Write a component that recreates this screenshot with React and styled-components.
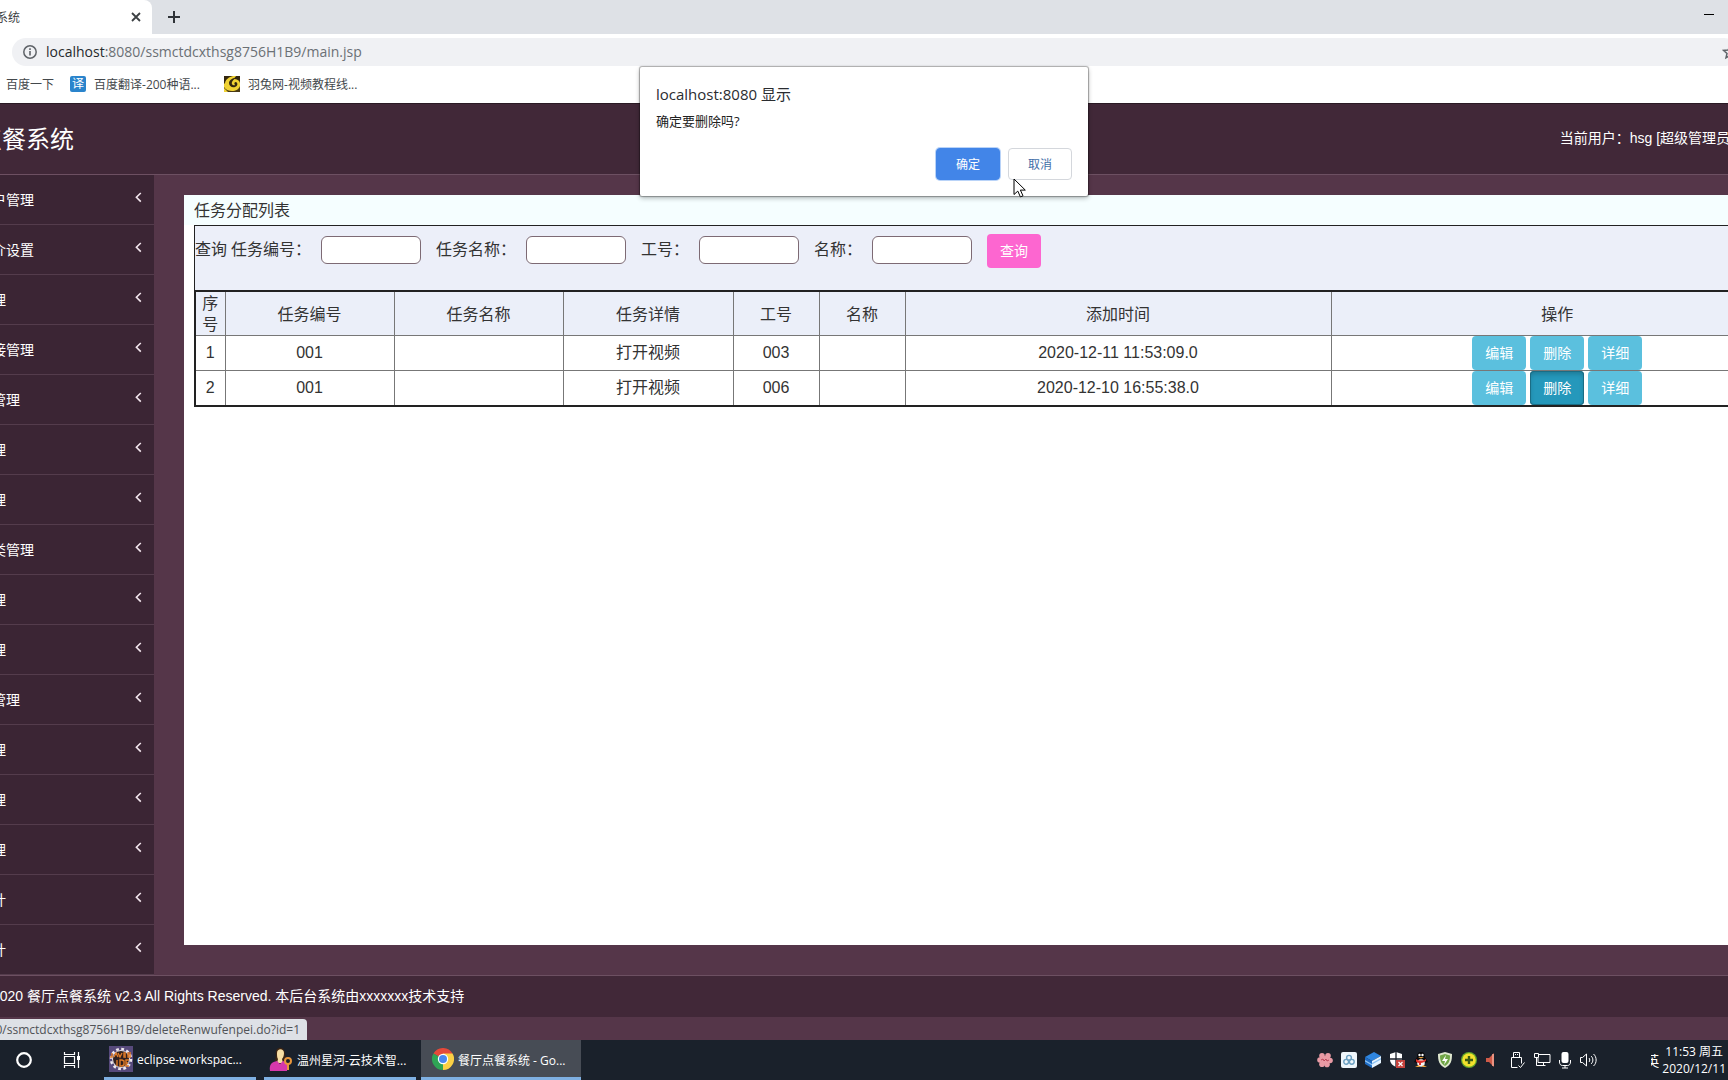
import React, { useState } from "react";
import styled, { createGlobalStyle, css } from "styled-components";

const MENU = [
  "系统用户管理",
  "系统简介设置",
  "公告管理",
  "友情链接管理",
  "服务员管理",
  "员工管理",
  "餐桌管理",
  "菜品分类管理",
  "菜品管理",
  "订单管理",
  "购物车管理",
  "评价管理",
  "任务管理",
  "留言管理",
  "销量统计",
  "订单统计",
];

const FIELDS = [
  { id: "bianhao", label: "任务编号：" },
  { id: "mingcheng", label: "任务名称：" },
  { id: "gonghao", label: "工号：" },
  { id: "xingming", label: "名称：" },
];

const ROWS = [
  {
    code: "001",
    name: "",
    detail: "打开视频",
    worker: "003",
    person: "",
    time: "2020-12-11 11:53:09.0",
  },
  {
    code: "001",
    name: "",
    detail: "打开视频",
    worker: "006",
    person: "",
    time: "2020-12-10 16:55:38.0",
  },
];

const App = () => {
  const [selected] = useState(1);

  return (
    <Viewport>
      <GlobalStyle />
      <Desktop>
        <TabStrip>
          <Tab>
            <TabTitle>餐厅点餐系统</TabTitle>
            <PlainButton aria-label="关闭标签页">
              <svg width="10" height="10" viewBox="0 0 10 10">
                <path d="M1 1l8 8M9 1l-8 8" stroke="#3c4043" strokeWidth="1.8" />
              </svg>
            </PlainButton>
          </Tab>
          <NewTab aria-label="打开新的标签页">
            <svg width="14" height="14" viewBox="0 0 14 14">
              <path d="M7 1v12M1 7h12" stroke="#2f3338" strokeWidth="2" />
            </svg>
          </NewTab>
          <Minimize aria-label="最小化">
            <svg width="10" height="10" viewBox="0 0 10 10">
              <path d="M0 4.5h10" stroke="#000" />
            </svg>
          </Minimize>
        </TabStrip>

        <AddressRow>
          <Omnibox>
            <InfoIcon />
            <Url>
              <b>localhost</b>:8080/ssmctdcxthsg8756H1B9/main.jsp
            </Url>
            <PlainButton aria-label="为此标签页添加书签">
              <svg width="16" height="16" viewBox="0 0 16 16">
                <path
                  d="M8 1.8l1.9 4.2 4.5.4-3.4 3 1 4.4L8 11.5l-4 2.3 1-4.4-3.4-3 4.5-.4z"
                  fill="none"
                  stroke="#5f6368"
                  strokeWidth="1.5"
                />
              </svg>
            </PlainButton>
          </Omnibox>
        </AddressRow>

        <Bookmarks>
          <Bookmark href="#baidu">百度一下</Bookmark>
          <Bookmark href="#fanyi" $wide>
            <TranslateIcon>译</TranslateIcon>
            百度翻译-200种语...
          </Bookmark>
          <Bookmark href="#yutu" $wide>
            <RabbitIcon />
            羽兔网-视频教程线...
          </Bookmark>
        </Bookmarks>

        <Header>
          <Brand>餐厅点餐系统</Brand>
          <User>当前用户：hsg [超级管理员]</User>
        </Header>

        <Body>
          <Sidebar>
            {MENU.map((label, i) => (
              <MenuItem key={i} href={`#menu-${i}`}>
                {label}
                <svg width="7" height="11" viewBox="0 0 7 11">
                  <path
                    d="M5.8 1L1.4 5.3 5.8 9.6"
                    fill="none"
                    stroke="#f3e6ee"
                    strokeWidth="1.6"
                  />
                </svg>
              </MenuItem>
            ))}
          </Sidebar>

          <Content>
            <Panel>
              <PanelTitle>任务分配列表</PanelTitle>
              <SearchBar onSubmit={(e) => e.preventDefault()}>
                <SearchCaption>查询</SearchCaption>
                {FIELDS.map((f) => (
                  <Field key={f.id}>
                    <label htmlFor={f.id}>{f.label}</label>
                    <TextInput id={f.id} type="text" />
                  </Field>
                ))}
                <SearchButton type="submit">查询</SearchButton>
              </SearchBar>
              <Table>
                <colgroup>
                  <Col $w={30} />
                  <Col $w={169} />
                  <Col $w={169} />
                  <Col $w={170} />
                  <Col $w={86} />
                  <Col $w={86} />
                  <Col $w={426} />
                  <col />
                </colgroup>
                <thead>
                  <tr>
                    <th>序号</th>
                    <th>任务编号</th>
                    <th>任务名称</th>
                    <th>任务详情</th>
                    <th>工号</th>
                    <th>名称</th>
                    <th>添加时间</th>
                    <th>操作</th>
                  </tr>
                </thead>
                <tbody>
                  {ROWS.map((row, i) => (
                    <tr key={row.time}>
                      <td>{i + 1}</td>
                      <td>{row.code}</td>
                      <td>{row.name}</td>
                      <td>{row.detail}</td>
                      <td>{row.worker}</td>
                      <td>{row.person}</td>
                      <td>{row.time}</td>
                      <td>
                        <Actions>
                          <ActionButton>编辑</ActionButton>
                          <ActionButton $active={i === selected}>
                            删除
                          </ActionButton>
                          <ActionButton>详细</ActionButton>
                        </Actions>
                      </td>
                    </tr>
                  ))}
                </tbody>
              </Table>
            </Panel>
          </Content>
        </Body>

        <Footer>
          Copyright © 2020 餐厅点餐系统 v2.3 All Rights Reserved.
          本后台系统由xxxxxxx技术支持
        </Footer>
        <Bottom>
          <StatusBubble>
            localhost:8080/ssmctdcxthsg8756H1B9/deleteRenwufenpei.do?id=1
          </StatusBubble>
        </Bottom>

        <Taskbar>
          <SystemButton aria-label="Cortana">
            <svg width="18" height="18" viewBox="0 0 18 18">
              <circle
                cx="9"
                cy="9"
                r="6.8"
                fill="none"
                stroke="#fff"
                strokeWidth="2.2"
              />
            </svg>
          </SystemButton>
          <SystemButton aria-label="任务视图">
            <svg width="18" height="18" viewBox="0 0 18 18">
              <path
                d="M1.5 1v2.5h10V1M1.5 17v-2.5h10V17M1.5 5.5h10v7h-10zM15.5 1v16"
                fill="none"
                stroke="#fff"
                strokeWidth="1.2"
              />
              <path d="M14 5h3v4h-3z" fill="#fff" />
            </svg>
          </SystemButton>
          <TaskButton>
            <EclipseIcon />
            <span>eclipse-workspac...</span>
          </TaskButton>
          <TaskButton>
            <PersonIcon />
            <span>温州星河-云技术智...</span>
          </TaskButton>
          <TaskButton $active>
            <ChromeIcon />
            <span>餐厅点餐系统 - Go...</span>
          </TaskButton>
          <Tray>
            <TrayIcons />
          </Tray>
          <Ime>英</Ime>
          <Clock>
            <span>11:53 周五</span>
            <span>2020/12/11</span>
          </Clock>
        </Taskbar>
      </Desktop>

      <Dialog role="dialog" aria-labelledby="dialog-title">
        <DialogTitle id="dialog-title">localhost:8080 显示</DialogTitle>
        <DialogMessage>确定要删除吗?</DialogMessage>
        <DialogActions>
          <DialogButton $primary>确定</DialogButton>
          <DialogButton>取消</DialogButton>
        </DialogActions>
        <Cursor width="13" height="20" viewBox="0 0 13 20">
          <path
            d="M1 1v15.5l3.8-3.4 2.6 5.8 2.6-1.1-2.6-5.7h4.9z"
            fill="#fff"
            stroke="#000"
          />
        </Cursor>
      </Dialog>
    </Viewport>
  );
};

const InfoIcon = () => (
  <svg width="14" height="14" viewBox="0 0 14 14">
    <circle cx="7" cy="7" r="6.2" fill="none" stroke="#5f6368" strokeWidth="1.5" />
    <path d="M7 6v4.5M7 3.3v1.6" stroke="#5f6368" strokeWidth="1.6" />
  </svg>
);

const RabbitIcon = () => (
  <svg width="16" height="16" viewBox="0 0 16 16">
    <path d="M0 0h16v16H0z" fill="#f0d233" />
    <path d="M0 0h9C5 1 2 3 1 7L0 8zM12 0h4v7c-1-3-3-4-6-4z" fill="#33260f" />
    <path
      d="M13 1C9 2 5 4 5 7c0 3 3 5 6 4 3-1 3-4 1-5-2 0-2 2-1 3-2 1-4-1-3-3 1-2 3-4 5-5z"
      fill="#33260f"
    />
    <path d="M0 11c2 3 5 4 8 4 4 0 7-2 8-5v6H0z" fill="#4a3a14" />
    <path d="M0 12l4 4H0z" fill="#f0d233" />
  </svg>
);

const EclipseIcon = () => (
  <svg width="24" height="26" viewBox="0 0 24 26">
    <path d="M0 0h24v26H0z" fill="#574a7c" />
    <circle
      cx="12"
      cy="13"
      r="10"
      fill="none"
      stroke="#efe9ee"
      strokeWidth="2.5"
      strokeDasharray="2.8 2.43"
    />
    <circle cx="12" cy="13" r="8.5" fill="#30201f" stroke="#e8e2e6" />
    <path
      d="M3 7v4H1M5 11l2-4 2 4M9 7l2 4 2-4M17 7h-2v4h2M15 9h2M22 7h-3v4h3M19 9h3M8 14v6M11 14v6h2l2-1v-4l-2-1zM20 14h-3v6h3M17 17h2"
      fill="none"
      stroke="#e07b28"
      strokeWidth="1.4"
    />
  </svg>
);

const PersonIcon = () => (
  <svg width="24" height="26" viewBox="0 0 24 26">
    <path d="M7 9c-2-9 9-10 9-1l1 7H6z" fill="#3b2413" />
    <path d="M8 7c0-5 7-5 7 0 0 3-1 5-2 6l1 4H8l1-4C8 12 8 9 8 7z" fill="#f7dfa4" />
    <path d="M1 25c-1-7 2-9 7-10l3 3 3-3c4 1 5 4 4 10z" fill="#d638ac" />
    <circle cx="19" cy="15" r="3" fill="none" stroke="#e8953b" strokeWidth="2" />
    <path d="M19 18v6" stroke="#e8953b" strokeWidth="2" />
  </svg>
);

const ChromeIcon = () => (
  <svg width="22" height="22" viewBox="0 0 22 22">
    <path d="M11 11L1.47 5.5A11 11 0 0 1 20.53 5.5z" fill="#e5493a" />
    <path d="M11 11L1.47 5.5A11 11 0 0 0 11 22z" fill="#2fa455" />
    <path d="M11 11L11 22A11 11 0 0 0 20.53 5.5H11z" fill="#fbd045" />
    <circle cx="11" cy="11" r="5.2" fill="#fff" />
    <circle cx="11" cy="11" r="4" fill="#4a86ee" />
  </svg>
);

const TrayIcons = () => (
  <>
    <svg width="16" height="16" viewBox="0 0 16 16">
      <g fill="#e89aa4">
        <circle cx="5" cy="3.8" r="2.8" />
        <circle cx="11" cy="3.8" r="2.8" />
        <circle cx="13" cy="8.5" r="2.8" />
        <circle cx="10" cy="12.4" r="2.8" />
        <circle cx="5" cy="12.2" r="2.8" />
        <circle cx="3" cy="8" r="2.8" />
        <circle cx="8" cy="8" r="4" />
      </g>
      <path d="M4 8l2-1 1 2 2-2 1 2 2-1" fill="none" stroke="#b94557" />
    </svg>
    <svg width="16" height="16" viewBox="0 0 16 16">
      <rect width="16" height="16" rx="2" fill="#eef6fb" />
      <g fill="none" stroke="#6ba0c2" strokeWidth="1.4">
        <circle cx="8" cy="5.8" r="2.4" />
        <circle cx="5.2" cy="9.8" r="2.4" />
        <circle cx="10.8" cy="9.8" r="2.4" />
      </g>
    </svg>
    <svg width="16" height="16" viewBox="0 0 16 16">
      <path d="M9 0l7 4-9 5-7-4z" fill="#2f86e0" />
      <path d="M0 5l7 4v7l-7-4z" fill="#1f6cc4" />
      <path d="M7 9l9-5v7l-9 5z" fill="#e5f3ff" />
      <path d="M7 11l9-5v1.5l-9 5zM0 8l7 4v1.500L0 9.500z" fill="#8cc2f2" />
    </svg>
    <svg width="16" height="16" viewBox="0 0 16 16">
      <path d="M7 0l6 2v5c0 4-2 6-6 8-4-2-6-4-6-8V2z" fill="#fff" />
      <path d="M7 0v15M1 7h12" stroke="#1b212b" strokeWidth="1.3" />
      <path d="M7 8h9v8H7z" fill="#c4423d" />
      <path d="M9.5 10l4 4M13.5 10l-4 4" stroke="#fff" strokeWidth="1.2" />
    </svg>
    <svg width="16" height="16" viewBox="0 0 16 16">
      <path
        d="M8 0c3 0 4 2 4 5l3 5-3 1c0 3-1 4-4 4s-4-1-4-4l-3-1 3-5c0-3 1-5 4-5z"
        fill="#0a0a0c"
      />
      <ellipse cx="8" cy="11" rx="3.8" ry="3.8" fill="#f4f4f4" />
      <path d="M3 7c3 2 7 2 10 0v2c-2 1-4 2-5 2v2H6v-2c-1 0-3-1-3-2z" fill="#e0322c" />
      <path d="M5 5h6l-3 1.5zM2 15l4-2 1 2zM14 15l-4-2-1 2z" fill="#eda33a" />
      <circle cx="6.5" cy="3" r="1.2" fill="#fff" />
      <circle cx="9.5" cy="3" r="1.2" fill="#fff" />
    </svg>
    <svg width="16" height="16" viewBox="0 0 16 16">
      <path d="M8 0l7 2c0 7-1 11-7 14C2 13 1 9 1 2z" fill="#dfe8cf" />
      <path d="M8 2l5 1.5c0 5-1 8-5 10.5-4-2.5-5-5.500-5-10.500z" fill="#6fa545" />
      <path d="M9 3L5 9h3l-1 4 4-6H8z" fill="#fff" />
    </svg>
    <svg width="16" height="16" viewBox="0 0 16 16">
      <circle cx="8" cy="8" r="8" fill="#5fa52c" />
      <circle cx="8" cy="8" r="6.8" fill="#f2e12c" />
      <path d="M8 4v8M4 8h8" stroke="#3a5a14" strokeWidth="2.4" />
    </svg>
    <svg width="16" height="16" viewBox="0 0 16 16">
      <path d="M1 6h3l5-5v14l-5-5H1z" fill="#cf5a48" />
      <path d="M8 2v12" stroke="#f3a896" strokeWidth="1.5" />
    </svg>
    <svg width="16" height="18" viewBox="0 0 16 18">
      <path
        d="M4.500 6.500v-5h6v5M2.500 16.500v-10h10v6M2.500 16.500h6M9.500 14.500l2 2 4-5M6.500 3v1M8.500 3v1"
        fill="none"
        stroke="#fff"
      />
    </svg>
    <svg width="18" height="16" viewBox="0 0 18 16">
      <path
        d="M6 2.500h11v8H5V6M1.500 1.500h4v4h-4zM3.500 5.500v8h9M10.500 10.500v3"
        fill="none"
        stroke="#fff"
      />
    </svg>
    <svg width="12" height="18" viewBox="0 0 12 18">
      <rect x="2.5" y="1" width="7" height="11" rx="2" fill="#fff" />
      <path
        d="M.5 9v2c0 2 1 3.500 3 3.500h5c2 0 3-1.500 3-3.500V9M6 14v3M3 17h6"
        fill="none"
        stroke="#fff"
      />
    </svg>
    <svg width="18" height="16" viewBox="0 0 18 16">
      <path
        d="M1.500 5.500h2l4-3.500v12l-4-3.500h-2zM10 6c1 1 1 3 0 4M12 4c2.500 2 2.500 6 0 8M14.500 2c3.500 3 3.500 9 0 12"
        fill="none"
        stroke="#fff"
      />
    </svg>
  </>
);

// Styled Components
const GlobalStyle = createGlobalStyle`
  * {
    box-sizing: border-box;
  }

  body {
    margin: 0;
    font-family: "Liberation Sans", "Noto Sans CJK SC", sans-serif;
    color: #333;
  }

  button {
    font-family: inherit;
    cursor: pointer;
  }

  svg {
    flex: none;
  }
`;

const uiFont = css`
  font-family: "Open Sans", "Noto Sans CJK SC", sans-serif;
`;

const Viewport = styled.div`
  position: relative;
  overflow: hidden;
`;

/* the desktop runs past the window by the same amount on both sides */
const Desktop = styled.div`
  display: flex;
  flex-direction: column;
  min-height: 100vh;
  margin: 0 -96px;
  background: #553649;
`;

const PlainButton = styled.button`
  display: flex;
  padding: 0;
  border: none;
  background: transparent;
`;

const TabStrip = styled.div`
  ${uiFont}
  display: flex;
  height: 34px;
  background: #dee1e6;
`;

const Tab = styled.div`
  display: flex;
  align-items: center;
  justify-content: space-between;
  width: 248px;
  padding: 0 11px 0 44px;
  background: #fff;
  border-radius: 0 8px 0 0;
`;

const TabTitle = styled.span`
  font-size: 12px;
  color: #3c4043;
`;

const NewTab = styled(PlainButton)`
  align-items: center;
  margin-left: 15px;
`;

const Minimize = styled(PlainButton)`
  align-items: center;
  margin-left: auto;
  padding-right: 110px;
  height: 30px;
`;

const AddressRow = styled.div`
  ${uiFont}
  padding: 4px 86px 4px 108px;
  background: #fff;
`;

const Omnibox = styled.div`
  display: flex;
  align-items: center;
  height: 28px;
  padding: 0 0 0 11px;
  border-radius: 14px;
  background: #f0f1f4;
`;

const Url = styled.span`
  flex: 1;
  margin-left: 9px;
  padding-bottom: 2px;
  font-size: 14px;
  color: #6b7075;

  b {
    font-weight: 400;
    color: #26292d;
  }
`;

const Bookmarks = styled.nav`
  ${uiFont}
  display: flex;
  align-items: flex-start;
  gap: 16px;
  height: 33px;
  padding: 4px 102px 0;
  background: #fff;
`;

const Bookmark = styled.a`
  display: flex;
  align-items: center;
  gap: 8px;
  min-width: ${(p) => (p.$wide ? "138px" : "0")};
  height: 20px;
  font-size: 12px;
  color: #44484c;
  text-decoration: none;
`;

const TranslateIcon = styled.span`
  width: 16px;
  height: 16px;
  border-radius: 2px;
  background: #2a84cc;
  color: #fff;
  font-size: 12px;
  line-height: 16px;
  text-align: center;
`;

const Header = styled.header`
  display: flex;
  align-items: center;
  justify-content: space-between;
  height: 72px;
  padding: 0 90px 4px 26px;
  background: #412838;
  border-top: 1px solid #2a1a24;
  border-bottom: 1px solid #6d5062;
  color: #fff;
`;

const Brand = styled.h1`
  margin: 0;
  font-size: 24px;
  font-weight: 400;
`;

const User = styled.span`
  font-size: 14px;
`;

const Body = styled.div`
  display: flex;
  flex: 1;
`;

const Sidebar = styled.nav`
  width: 250px;
  background: #3b2534;
`;

const MenuItem = styled.a`
  display: flex;
  align-items: center;
  justify-content: space-between;
  height: 50px;
  padding: 0 12px 2px 46px;
  border-bottom: 1px solid #543c4c;
  color: #fff;
  font-size: 14px;
  text-decoration: none;

  svg {
    margin-bottom: 2px;
  }
`;

const Content = styled.main`
  flex: 1;
  min-width: 0;
  padding: 20px 30px 30px;
`;

const Panel = styled.section`
  height: 100%;
  padding: 0 9px 0 10px;
  background: linear-gradient(#f5feff 30px, #fff 30px);
`;

const PanelTitle = styled.h2`
  margin: 0;
  padding-top: 2px;
  font-size: 16px;
  font-weight: 400;
  line-height: 28px;
`;

const SearchBar = styled.form`
  display: flex;
  align-items: flex-start;
  height: 65px;
  padding-top: 8px;
  border: 1px solid #222;
  border-bottom: none;
  background: #eceff9;
  font-size: 16px;
  line-height: 32px;
`;

const SearchCaption = styled.span`
  margin-right: 4px;
`;

const Field = styled.div`
  display: flex;
  align-items: center;
  margin-right: 15px;

  label {
    margin-right: 10px;
  }
`;

const TextInput = styled.input`
  width: 100px;
  height: 28px;
  border: 1px solid #7d6a74;
  border-radius: 6px;
  background: #fff;
`;

const BaseButton = styled.button`
  height: 34px;
  padding: 0 13px 2px;
  border: none;
  border-radius: 4px;
  color: #fff;
  font-size: 14px;
`;

const SearchButton = styled(BaseButton)`
  background: #fd66d0;
`;

const Table = styled.table`
  width: 100%;
  table-layout: fixed;
  border-collapse: collapse;
  border: 2px solid #222;
  font-size: 16px;
  text-align: center;

  th,
  td {
    height: 35px;
    padding: 0;
    border: 1px solid #777;
    font-weight: 400;
    line-height: 20px;
  }

  th {
    height: 43px;
    padding: 1px 5px 0;
    background: #ebeff9;
    line-height: 21px;
  }
`;

const Col = styled.col`
  width: ${(p) => p.$w}px;
`;

const Actions = styled.div`
  display: flex;
  justify-content: center;
  gap: 4px;
`;

const ActionButton = styled(BaseButton)`
  background: #5bc0de;

  ${(p) =>
    p.$active &&
    css`
      background: #2598bb;
      box-shadow: inset 0 0 0 1px #1b6d85, inset 0 3px 5px rgba(0, 0, 0, 0.2);
    `}
`;

const Footer = styled.footer`
  height: 42px;
  padding-left: 10px;
  border-top: 1px solid #6d5062;
  background: #412838;
  color: #fff;
  font-size: 14px;
  line-height: 41px;
`;

const Bottom = styled.div`
  display: flex;
  align-items: flex-end;
  height: 23px;
`;

const StatusBubble = styled.div`
  ${uiFont}
  display: flex;
  justify-content: flex-end;
  width: 403px;
  padding-right: 7px;
  border-radius: 0 4px 0 0;
  background: #dee1e6;
  color: #505357;
  font-size: 12px;
  line-height: 21px;
`;

const Taskbar = styled.div`
  ${uiFont}
  display: flex;
  align-items: center;
  height: 40px;
  padding: 0 98px 0 96px;
  background: #1a212b;
  color: #fff;
`;

const SystemButton = styled(PlainButton)`
  justify-content: center;
  width: 48px;
`;

const TaskButton = styled.button`
  display: flex;
  align-items: center;
  gap: 4px;
  width: ${(p) => (p.$active ? 160 : 152)}px;
  height: 40px;
  margin-left: ${(p) => (p.$active ? 5 : 8)}px;
  padding: 0 ${(p) => (p.$active ? 11 : 5)}px;
  border: none;
  border-bottom: 3px solid #7fb0e2;
  background: ${(p) => (p.$active ? "#474c55" : "transparent")};
  color: #fff;
  font-size: 12px;
  white-space: nowrap;

  span {
    padding-top: 2px;
  }
`;

const Tray = styled.div`
  display: flex;
  align-items: center;
  gap: 8px;
  margin-left: auto;
`;

const Ime = styled.span`
  display: flex;
  justify-content: flex-end;
  width: 8px;
  margin: 0 3px 0 54px;
  overflow: hidden;
  font-size: 14px;
`;

const Clock = styled.div`
  display: flex;
  flex-direction: column;
  align-items: center;
  font-size: 12px;
  line-height: 17px;
`;

const Dialog = styled.div`
  ${uiFont}
  position: absolute;
  top: 67px;
  left: 50%;
  width: 448px;
  margin-left: -224px;
  padding: 15px 16px 16px;
  background: #fff;
  border-radius: 2px;
  box-shadow: 0 0 1px 1px rgba(0, 0, 0, 0.3), 0 2px 5px rgba(0, 0, 0, 0.3);
`;

const DialogTitle = styled.h3`
  margin: 0;
  font-size: 15px;
  font-weight: 400;
  line-height: 24px;
  color: #2a2c30;
`;

const DialogMessage = styled.p`
  margin: 4px 0 16px;
  font-size: 13px;
  line-height: 22px;
  color: #222;
`;

const DialogActions = styled.div`
  display: flex;
  justify-content: flex-end;
  gap: 8px;
`;

const DialogButton = styled.button`
  width: 64px;
  height: 32px;
  border: 1px solid ${(p) => (p.$primary ? "#4285e8" : "#d4d7dc")};
  border-radius: 4px;
  background: ${(p) => (p.$primary ? "#4285e8" : "#fff")};
  box-shadow: ${(p) => (p.$primary ? "0 0 0 1px #b9d3f8" : "none")};
  color: ${(p) => (p.$primary ? "#fff" : "#3f6ea8")};
  font-size: 12px;
`;

const Cursor = styled.svg`
  position: absolute;
  top: 111px;
  left: 373px;
`;

export default App;
